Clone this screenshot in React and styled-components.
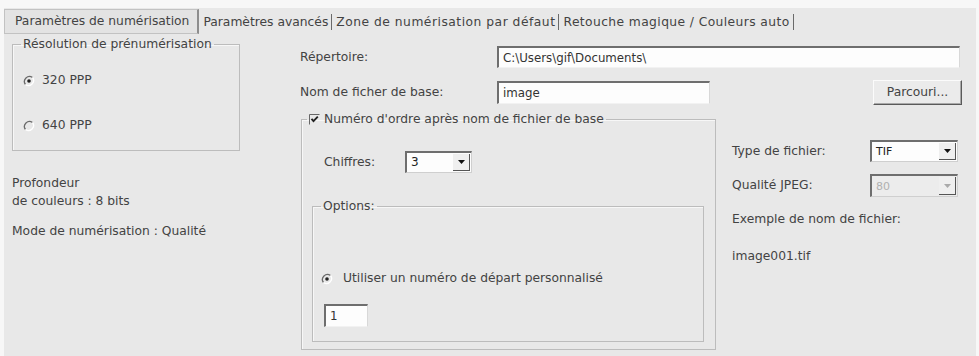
import React from 'react';
import styled, { createGlobalStyle } from 'styled-components';

const GlobalStyle = createGlobalStyle`
  body {
    margin: 0;
    background: #f7f7f7;
  }
`;

const Window = styled.div`
  margin: 8px 3px 0 4px;
  height: 348px;
  background: #e8e8e8;
  color: #434343;
  font: 12.3px/15px "DejaVu Sans", Verdana, sans-serif;
  display: flex;
  flex-direction: column;
`;

const TabBar = styled.div`
  display: flex;
  align-items: center;
  height: 24px;
`;

const Tab = styled.div`
  white-space: nowrap;
  letter-spacing: ${p => p.$spacing || 0}px;
  padding: ${p => (p.$active ? '0 8px 0 10px' : '0 3px 0 4px')};
  height: ${p => (p.$active ? '23px' : '16px')};
  line-height: ${p => (p.$active ? '22px' : '16px')};
  align-self: ${p => (p.$active ? 'flex-start' : 'center')};
  margin-top: ${p => (p.$active ? '1px' : '3px')};
  border: ${p => (p.$active ? '1px solid #c2c2c2' : 'none')};
  border-right: ${p => (p.$active ? '2px solid #8d8d8d' : '1px solid #6a6a6a')};
  background: ${p => (p.$active ? '#e3e3e3' : 'transparent')};
`;

const Body = styled.div`
  display: grid;
  grid-template-columns: 296px 1fr;
  flex: 1;
`;

const LeftCol = styled.div`
  padding-left: 8px;
`;

const GroupBox = styled.fieldset`
  box-sizing: border-box;
  margin: ${p => p.$margin || '0'};
  padding: 0;
  width: ${p => p.$width}px;
  height: ${p => p.$height}px;
  border: 1px solid #bcbcbc;
  box-shadow: inset 1px 1px 0 #f7f7f7;
  min-width: 0;
`;

const Legend = styled.legend`
  margin-left: ${p => p.$offset || 8}px;
  padding: 0 2px;
  display: flex;
  align-items: center;
  gap: 4px;
  line-height: 15px;
`;

const RadioRow = styled.label`
  display: flex;
  align-items: center;
  gap: ${p => p.$gap || 7}px;
  height: 15px;
  margin: ${p => p.$margin};
  padding-left: ${p => p.$indent || 10}px;
`;

const InfoBlock = styled.div`
  margin-top: 23px;
  line-height: 18px;
  p {
    margin: 0;
  }
  p + p {
    margin-top: 12px;
  }
`;

const RightCol = styled.div`
  padding-right: 14px;
  display: flex;
  flex-direction: column;
`;

const FieldRow = styled.div`
  display: flex;
  align-items: center;
  margin-top: ${p => p.$top}px;
`;

const Label = styled.span`
  width: ${p => p.$width}px;
  flex: none;
  white-space: nowrap;
`;

const TextBox = styled.div`
  box-sizing: border-box;
  width: ${p => p.$width}px;
  height: ${p => p.$height || 22}px;
  background: #fdfdfd;
  border-top: 2px solid #6e6e6e;
  border-left: 2px solid #6e6e6e;
  border-right: 1px solid #d8d8d8;
  border-bottom: 1px solid #f2f2f2;
  padding: 1px 4px 0;
  display: flex;
  align-items: center;
  color: #333;
  font-size: 11.8px;
  white-space: nowrap;
  overflow: hidden;
`;

const PushButton = styled.button`
  margin-left: auto;
  width: 89px;
  height: 25px;
  background: #ebebeb;
  border: 1px solid;
  border-color: #fbfbfb #5a5a5a #5a5a5a #fbfbfb;
  box-shadow: inset -1px -1px 0 #a9a9a9;
  font: inherit;
  color: #434343;
  padding: 0;
`;

const LowerRow = styled.div`
  display: flex;
  margin-top: 7px;
  margin-left: 1px;
`;

const Inner = styled.div`
  padding-left: ${p => p.$indent || 0}px;
  margin-top: ${p => p.$top || 0}px;
`;

const ComboWrap = styled.div`
  box-sizing: border-box;
  width: ${p => p.$width}px;
  height: ${p => p.$height || 22}px;
  background: ${p => (p.$disabled ? '#ececec' : '#fdfdfd')};
  border-top: 2px solid #6e6e6e;
  border-left: 2px solid #6e6e6e;
  border-right: 1px solid #cfcfcf;
  border-bottom: 1px solid #cfcfcf;
  display: flex;
  align-items: stretch;
  color: ${p => (p.$disabled ? '#b0b0b0' : '#222')};
`;

const ComboText = styled.span`
  flex: 1;
  padding-left: 4px;
  display: flex;
  align-items: center;
  font-size: ${p => p.$size || 11}px;
`;

const ComboArrow = styled.span`
  width: 16px;
  margin: 1px 1px 1px 0;
  border-right: 1px solid #555;
  border-bottom: 1px solid #555;
  background: #efefef;
  display: flex;
  align-items: center;
  justify-content: center;
`;

const SidePanel = styled.div`
  margin-left: 16px;
  padding-top: 28px;
  display: flex;
  flex-direction: column;
`;

const SideRow = styled.div`
  display: flex;
  align-items: center;
  margin-top: ${p => p.$top || 0}px;
`;

const SideText = styled.div`
  margin-top: ${p => p.$top}px;
`;

function Radio({ checked }) {
  return (
    <svg width="12" height="12" viewBox="0 0 12 12">
      <path d="M9.5 2.5 A5 5 0 0 0 2.5 9.5" fill="none" stroke="#6a6a6a" strokeWidth="1.3" />
      <path d="M2.5 9.5 A5 5 0 0 0 9.5 2.5" fill="none" stroke="#ffffff" strokeWidth="1.3" />
      {checked && <circle cx="6" cy="6" r="1.8" fill="#222" />}
    </svg>
  );
}

function CheckBox() {
  return (
    <svg width="11" height="11" viewBox="0 0 11 11">
      <path d="M0.5 10.5 V0.5 H10.5" fill="none" stroke="#666" strokeWidth="1" />
      <path d="M2.5 4.8 L4.5 7.2 L8.8 2.6" fill="none" stroke="#222" strokeWidth="1.8" />
    </svg>
  );
}

function Combo({ value, width, height, disabled, size }) {
  return (
    <ComboWrap $width={width} $height={height} $disabled={disabled}>
      <ComboText $size={size}>{value}</ComboText>
      <ComboArrow>
        <svg width="7" height="4" viewBox="0 0 7 4">
          <path d="M0 0 H7 L3.5 4 Z" fill={disabled ? '#aaa' : '#111'} />
        </svg>
      </ComboArrow>
    </ComboWrap>
  );
}

export default function App() {
  return (
    <>
      <GlobalStyle />
      <Window>
        <TabBar>
          <Tab $active>Paramètres de numérisation</Tab>
          <Tab>Paramètres avancés</Tab>
          <Tab $spacing={0.5}>Zone de numérisation par défaut</Tab>
          <Tab $spacing={0.4}>Retouche magique / Couleurs auto</Tab>
        </TabBar>
        <Body>
          <LeftCol>
            <GroupBox $width={228} $height={114} $margin="5px 0 0">
              <Legend>Résolution de prénumérisation</Legend>
              <RadioRow $margin="21px 0 0">
                <Radio checked />
                320 PPP
              </RadioRow>
              <RadioRow $margin="30px 0 0">
                <Radio />
                640 PPP
              </RadioRow>
            </GroupBox>
            <InfoBlock>
              <p>
                Profondeur
                <br />
                de couleurs : 8 bits
              </p>
              <p>Mode de numérisation : Qualité</p>
            </InfoBlock>
          </LeftCol>
          <RightCol>
            <FieldRow $top={14}>
              <Label $width={197}>Répertoire:</Label>
              <TextBox $width={463}>C:\Users\gif\Documents\</TextBox>
            </FieldRow>
            <FieldRow $top={12}>
              <Label $width={197}>Nom de ficher de base:</Label>
              <TextBox $width={213} $height={23}>image</TextBox>
              <PushButton>Parcouri...</PushButton>
            </FieldRow>
            <LowerRow>
              <GroupBox $width={415} $height={238}>
                <Legend $offset={5}>
                  <CheckBox />
                  Numéro d'ordre après nom de fichier de base
                </Legend>
                <Inner $indent={22} $top={24}>
                  <FieldRow $top={0}>
                    <Label $width={81}>Chiffres:</Label>
                    <Combo value="3" width={67} size={12} />
                  </FieldRow>
                </Inner>
                <Inner $indent={10} $top={26}>
                  <GroupBox $width={392} $height={143}>
                    <Legend>Options:</Legend>
                    <RadioRow $margin="57px 0 0" $indent={8} $gap={10}>
                      <Radio checked />
                      Utiliser un numéro de départ personnalisé
                    </RadioRow>
                    <Inner $indent={11} $top={18}>
                      <TextBox $width={44} $height={23}>1</TextBox>
                    </Inner>
                  </GroupBox>
                </Inner>
              </GroupBox>
              <SidePanel>
                <SideRow>
                  <Label $width={138}>Type de fichier:</Label>
                  <Combo value="TIF" width={88} height={22} />
                </SideRow>
                <SideRow $top={12}>
                  <Label $width={138}>Qualité JPEG:</Label>
                  <Combo value="80" width={88} height={23} disabled />
                </SideRow>
                <SideText $top={15}>Exemple de nom de fichier:</SideText>
                <SideText $top={22}>image001.tif</SideText>
              </SidePanel>
            </LowerRow>
          </RightCol>
        </Body>
      </Window>
    </>
  );
}
